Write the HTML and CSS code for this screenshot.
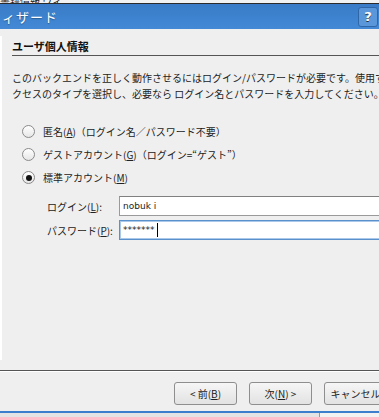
FILE: index.html
```
<!DOCTYPE html>
<html lang="ja">
<head>
    <meta charset="UTF-8">
    <title>ウィザード</title>
    <link rel="stylesheet" href="styles.css">
</head>
<body>
    <div class="behind">書籍情報 ウィ</div>
    <div class="titlebar">
        <span class="title">ィザード</span>
        <span class="help">?</span>
    </div>
    <div class="window">
        <div class="panel">
            <div class="heading">ユーザ個人情報</div>
            <div class="intro">
                <div class="line">このバックエンドを正しく動作させるにはログイン/パスワードが必要です。使用するア</div>
                <div class="line">クセスのタイプを選択し、必要なら ログイン名とパスワードを入力してください。</div>
            </div>
            <div class="choices">
                <label class="choice"><span class="radio"></span><span>匿名(<u>A</u>)（ログイン名／パスワード不要）</span></label>
                <label class="choice"><span class="radio"></span><span>ゲストアカウント(<u>G</u>)（ログイン=“ゲスト”）</span></label>
                <label class="choice"><span class="radio checked"></span><span>標準アカウント(<u>M</u>)</span></label>
            </div>
            <div class="form">
                <div class="field">
                    <span class="label">ログイン(<u>L</u>):</span>
                    <div class="input">nobuk i</div>
                </div>
                <div class="field">
                    <span class="label">パスワード(<u>P</u>):</span>
                    <div class="input focus">*******<span class="caret"></span></div>
                </div>
            </div>
        </div>
        <div class="buttons">
            <button>&lt; 前(<u>B</u>)</button>
            <button>次(<u>N</u>) &gt;</button>
            <button>キャンセル</button>
        </div>
    </div>
    <div class="taskbar">
        <span class="task"></span>
        <span class="task light"></span>
    </div>
</body>
</html>
```
FILE: styles.css
```
body {
    margin: 0;
    width: 379px;
    height: 417px;
    overflow: hidden;
    background: #efefef;
    font-family: "Noto Sans CJK JP", "DejaVu Sans", sans-serif;
    font-size: 10px;
    color: #222;
}
.behind {
    height: 3px;
    overflow: hidden;
    background: #f2f2f2;
    border-bottom: 1px solid #2b2b2b;
    font-size: 10px;
    line-height: 2px;
}
.titlebar {
    height: 25px;
    background: linear-gradient(#397bc6, #4289d6);
    display: flex;
    align-items: center;
    justify-content: space-between;
    padding: 0 1px 0 2px;
}
.title {
    color: #fff;
    font-size: 13px;
    letter-spacing: 1px;
    text-shadow: 0 1px 1px rgba(0, 0, 0, 0.3);
}
.help {
    width: 18px;
    height: 18px;
    border: 1px solid #2f66a8;
    border-radius: 3px;
    background: #5a97da;
    color: #fff;
    font-family: "DejaVu Sans", sans-serif;
    font-weight: bold;
    font-size: 13px;
    line-height: 18px;
    text-align: center;
    text-shadow: 0 1px 0 #234;
}
.window {
    height: 382px;
    display: flex;
    flex-direction: column;
}
.panel {
    margin-top: 7px;
    height: 321px;
    border-left: 2px solid #fff;
    padding: 3px 0 0 10px;
    overflow: hidden;
}
.heading {
    font-weight: bold;
    font-size: 11px;
    line-height: 14px;
    padding-bottom: 2px;
    border-bottom: 1px solid #555;
    color: #111;
}
.intro {
    margin-top: 14px;
    white-space: nowrap;
}
.line {
    line-height: 16px;
    height: 16px;
}
.choices {
    margin-top: 18px;
    padding-left: 10px;
    display: flex;
    flex-direction: column;
}
.choice {
    height: 23px;
    display: flex;
    align-items: center;
    gap: 8px;
}
.radio {
    width: 11px;
    height: 11px;
    border: 1px solid #8a8a8a;
    border-radius: 50%;
    background: linear-gradient(#fff, #e6e6e6);
    display: flex;
    align-items: center;
    justify-content: center;
}
.radio.checked::after {
    content: "";
    width: 6px;
    height: 6px;
    border-radius: 50%;
    background: #111;
}
.form {
    margin-top: 7px;
    display: flex;
    flex-direction: column;
    gap: 4px;
}
.field {
    display: flex;
    align-items: center;
}
.label {
    width: 72px;
    padding-left: 35px;
}
.input {
    flex: 1;
    height: 18px;
    margin-right: -10px;
    background: #fff;
    border: 1px solid #9a9a9a;
    border-top-color: #808080;
    line-height: 18px;
    padding-left: 3px;
    font-family: "DejaVu Sans", sans-serif;
    font-size: 9px;
    display: flex;
    align-items: center;
}
.input.focus {
    border: 1px solid #5a90cc;
    box-shadow: inset 0 0 0 1px #a9c8ea;
}
.caret {
    width: 1px;
    height: 14px;
    background: #000;
    margin-left: 2px;
}
.buttons {
    margin-top: 10px;
    border-top: 1px solid #555;
    box-shadow: inset 0 1px 0 #fff;
    padding: 11px 0 0 174px;
    display: flex;
    gap: 12px;
    white-space: nowrap;
}
.buttons button {
    flex: none;
    width: 63px;
    height: 23px;
    border: 1px solid #8e8e8e;
    border-radius: 3px;
    background: linear-gradient(#f6f6f6, #e2e2e2);
    font-family: "Noto Sans CJK JP", sans-serif;
    font-size: 10px;
    color: #222;
    padding: 0;
}
.taskbar {
    height: 4px;
    border-top: 2px solid #3b7fcd;
    background: #e4e4e4;
    display: flex;
    padding-left: 207px;
}
.task {
    width: 112px;
    border-right: 1px solid #999;
}
.task.light {
    flex: 1;
    background: #f2f2f2;
    border-right: none;
}
```
